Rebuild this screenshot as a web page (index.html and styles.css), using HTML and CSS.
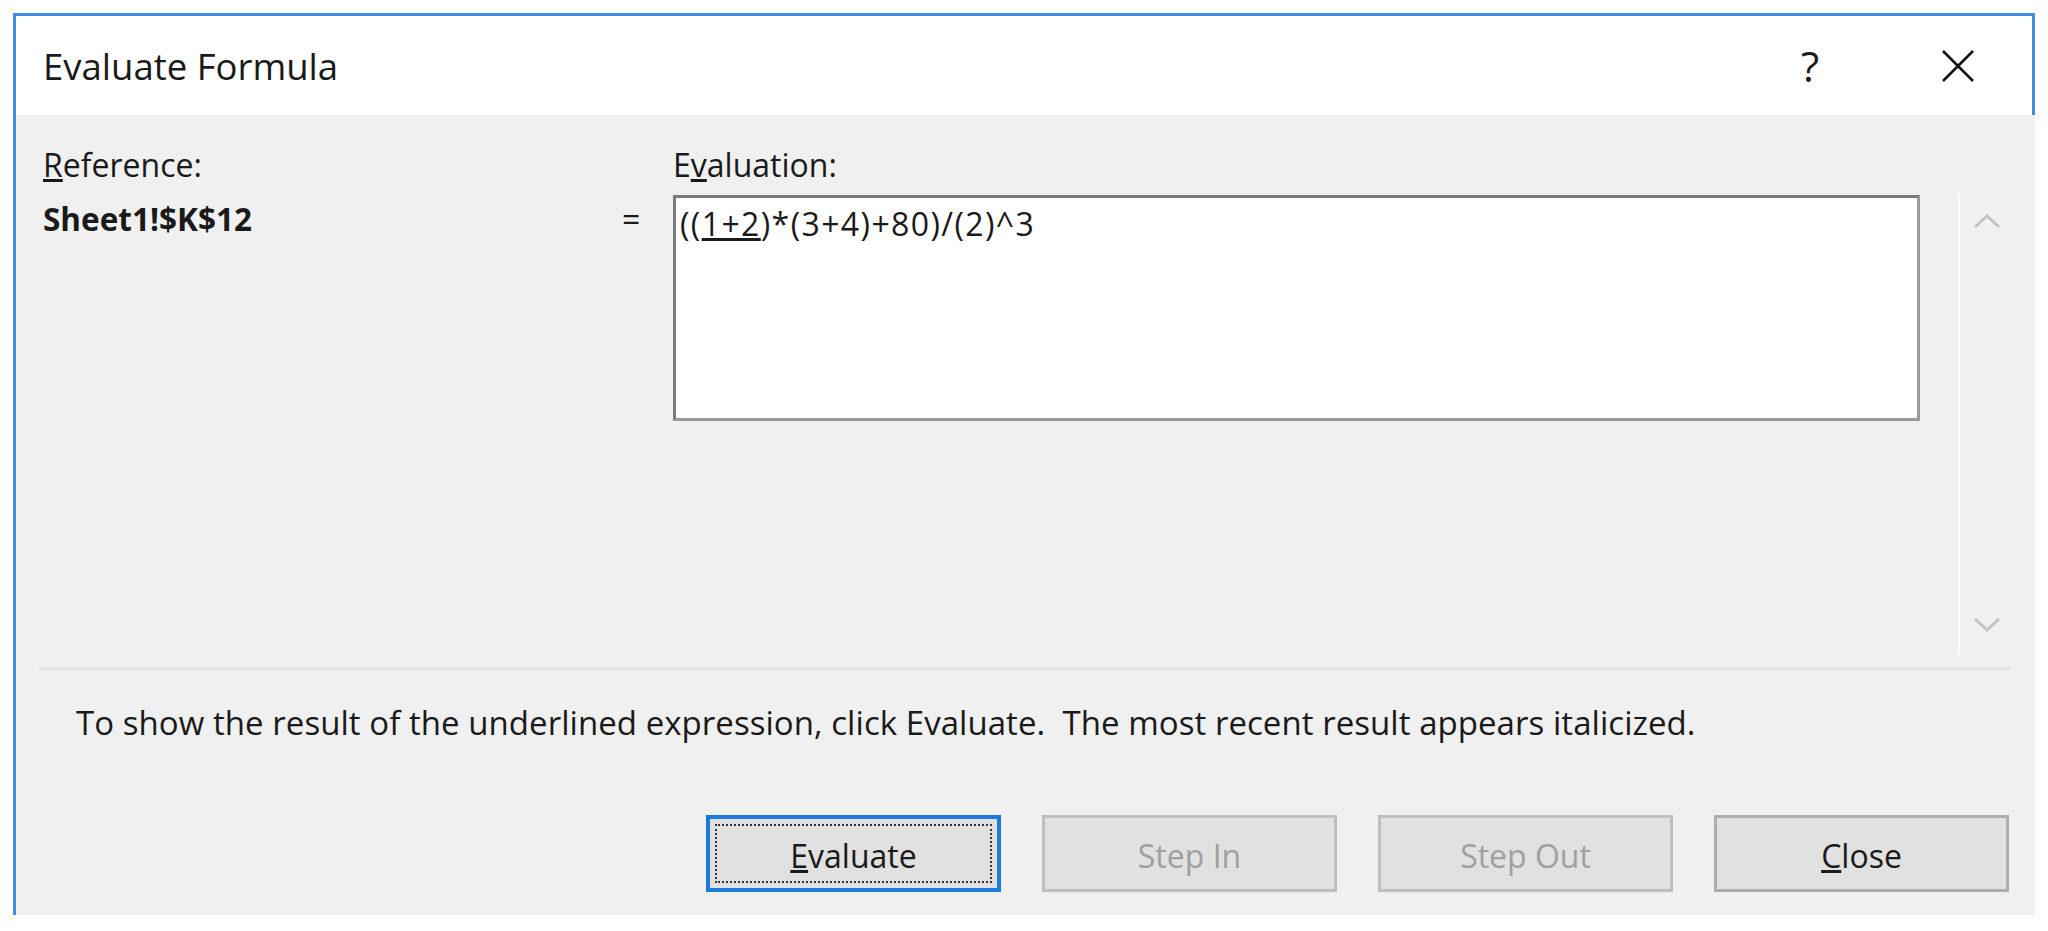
FILE: index.html
```html
<!DOCTYPE html>
<html lang="en">
<head>
	<meta charset="UTF-8">
	<title>Evaluate Formula</title>
	<link rel="stylesheet" href="styles.css">
</head>
<body>
	<div class="dialog">
		<div class="titlebar">
			<span class="title">Evaluate Formula</span>
			<span class="help">?</span>
			<span class="close">
				<svg width="34" height="34" viewBox="0 0 34 34"><path d="M2 2 L32 32 M32 2 L2 32" stroke="#111" stroke-width="2.6" fill="none"/></svg>
			</span>
		</div>
		<div class="content">
			<div class="eval-area">
				<div class="label"><u>R</u>eference:</div>
				<div class="label label-eval">E<u>v</u>aluation:</div>
				<div class="ref-value">Sheet1!$K$12</div>
				<div class="eq">=</div>
				<div class="formula-box">((<u>1+2</u>)*(3+4)+80)/(2)^3</div>
				<div class="scrollbar">
					<svg width="28" height="16" viewBox="0 0 28 16"><path d="M2 14 L14 3 L26 14" stroke="#c4c4c4" stroke-width="3" fill="none"/></svg>
					<svg width="28" height="16" viewBox="0 0 28 16"><path d="M2 2 L14 13 L26 2" stroke="#c4c4c4" stroke-width="3" fill="none"/></svg>
				</div>
			</div>
			<div class="separator"></div>
			<p class="hint">To show the result of the underlined expression, click Evaluate.&nbsp; The most recent result appears italicized.</p>
			<div class="buttons">
				<button class="btn btn-focus"><span class="focus-ring"><u>E</u>valuate</span></button>
				<button class="btn" disabled>Step In</button>
				<button class="btn" disabled>Step Out</button>
				<button class="btn"><u>C</u>lose</button>
			</div>
		</div>
	</div>
</body>
</html>
```

FILE: styles.css
```css
body {
	margin: 0;
	background-color: #fff;
	font-family: "Open Sans", "Noto Sans", sans-serif;
	color: #1a1a1a;
}
.dialog {
	margin: 13px 0 0 13px;
	width: 2022px;
}
.titlebar {
	display: flex;
	align-items: center;
	height: 99px;
	background-color: #fff;
	border: 3px solid #3d8ee0;
	border-bottom: none;
	padding-left: 27px;
}
.title {
	font-size: 36.5px;
	flex: 1;
}
.help {
	width: 60px;
	text-align: center;
	font-size: 42px;
	margin-right: 68px;
}
.close {
	width: 100px;
	display: flex;
	justify-content: center;
	margin-right: 24px;
}
.content {
	background-color: #f0f0f0;
	border-left: 3px solid #3d8ee0;
	height: 800px;
}
.eval-area {
	display: grid;
	grid-template-columns: 579px 51px 1247px 38px 77px;
	grid-template-rows: 40px auto;
	row-gap: 10px;
	padding: 30px 0 0 27px;
	font-size: 32px;
	line-height: 40px;
}
.label-eval {
	grid-column: 3;
}
.ref-value {
	grid-column: 1;
	font-weight: bold;
	margin-top: 4px;
	font-size: 31.5px;
}
.eq {
	grid-column: 2;
	margin-top: 4px;
}
.formula-box {
	grid-column: 3;
	height: 214px;
	background-color: #fff;
	border: 3px solid #9a9a9a;
	border-top-color: #7a7a7a;
	border-left-color: #7a7a7a;
	padding: 6px 0 0 4px;
	letter-spacing: 1.4px;
}
.scrollbar {
	grid-column: 5;
	margin-top: -2px;
	height: 462px;
	border-left: 2px solid #fbfbfb;
	display: flex;
	flex-direction: column;
	justify-content: space-between;
	align-items: center;
	padding: 20px 22px 22px 0;
	box-sizing: border-box;
}
.separator {
	height: 3px;
	background-color: #e2e2e2;
	margin: 12px 24px 0 23px;
}
.hint {
	margin: 33px 0 0 60px;
	font-size: 33px;
	line-height: 40px;
	letter-spacing: 0.05px;
}
.buttons {
	display: flex;
	justify-content: flex-end;
	gap: 41px;
	padding-right: 26px;
	margin-top: 72px;
}
.btn {
	width: 295px;
	height: 77px;
	background-color: #e1e1e1;
	border: 3px solid #adadad;
	font-family: "Open Sans", "Noto Sans", sans-serif;
	font-size: 32px;
	color: #1a1a1a;
	padding: 3px 0 0;
}
.btn:disabled {
	color: #a0a0a0;
	border-color: #bfbfbf;
}
.btn-focus {
	border: 4px solid #1c7ad9;
	padding: 5px;
}
.focus-ring {
	display: flex;
	align-items: center;
	justify-content: center;
	height: 100%;
	padding-top: 3px;
	border: 2px dotted #333;
	box-sizing: border-box;
}
```
